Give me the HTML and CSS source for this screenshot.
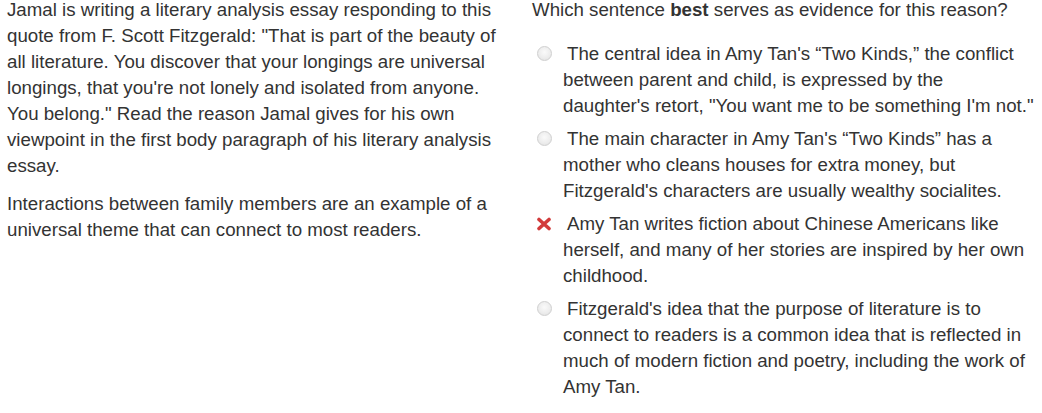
FILE: index.html
```html
<!DOCTYPE html>
<html>
<head>
<meta charset="utf-8">
<link rel="stylesheet" href="styles.css">
</head>
<body>
<div class="page">
  <div class="left">
    <p class="para">Jamal is writing a literary analysis essay responding to this quote from F. Scott Fitzgerald: "That is part of the beauty of all literature. You discover that your longings are universal longings, that you're not lonely and isolated from anyone. You belong." Read the reason Jamal gives for his own viewpoint in the first body paragraph of his literary analysis essay.</p>
    <p class="para">Interactions between family members are an example of a universal theme that can connect to most readers.</p>
  </div>
  <div class="right">
    <p class="question">Which sentence <b>best</b> serves as evidence for this reason?</p>
    <ul class="options">
      <li class="option"><span class="radio"></span>The central idea in Amy Tan's “Two Kinds,” the conflict between parent and child, is expressed by the daughter's retort, "You want me to be something I'm not."</li>
      <li class="option"><span class="radio"></span>The main character in Amy Tan's “Two Kinds” has a mother who cleans houses for extra money, but Fitzgerald's characters are usually wealthy socialites.</li>
      <li class="option"><svg class="xmark" width="16" height="14" viewBox="0 0 16 14"><path d="M3 2.5 L13 11.5 M13 2.5 L3 11.5" stroke="#d23b3b" stroke-width="3.6" stroke-linecap="round"/></svg>Amy Tan writes fiction about Chinese Americans like herself, and many of her stories are inspired by her own childhood.</li>
      <li class="option"><span class="radio"></span>Fitzgerald's idea that the purpose of literature is to connect to readers is a common idea that is reflected in much of modern fiction and poetry, including the work of Amy Tan.</li>
    </ul>
  </div>
</div>
</body>
</html>
```

FILE: styles.css
```css
html, body {
  margin: 0;
  padding: 0;
  background: #fff;
}
body {
  font-family: "Liberation Sans", Arial, sans-serif;
  font-size: 18.7px;
  line-height: 26px;
  color: #333;
}
.page {
  display: flex;
  padding: 0 0 0 7px;
  margin-top: -3px;
}
.left {
  width: 500px;
  flex: none;
}
.right {
  margin-left: 25px;
  width: 502px;
  flex: none;
}
.para {
  margin: 0 0 12px 0;
}
.question {
  margin: 0 0 18px 0;
}
.options {
  list-style: none;
  margin: 0;
  padding: 0;
}
.option {
  position: relative;
  padding-left: 31px;
  margin-bottom: 7px;
  text-indent: 4px;
}
.radio {
  position: absolute;
  left: 5px;
  top: 5px;
  width: 13px;
  height: 13px;
  border-radius: 50%;
  border: 1px solid #d0d0d0;
  background: radial-gradient(circle at 50% 40%, #fafafa 0%, #ececec 60%, #dcdcdc 100%);
}
.xmark {
  position: absolute;
  left: 4px;
  top: 6px;
}
```
